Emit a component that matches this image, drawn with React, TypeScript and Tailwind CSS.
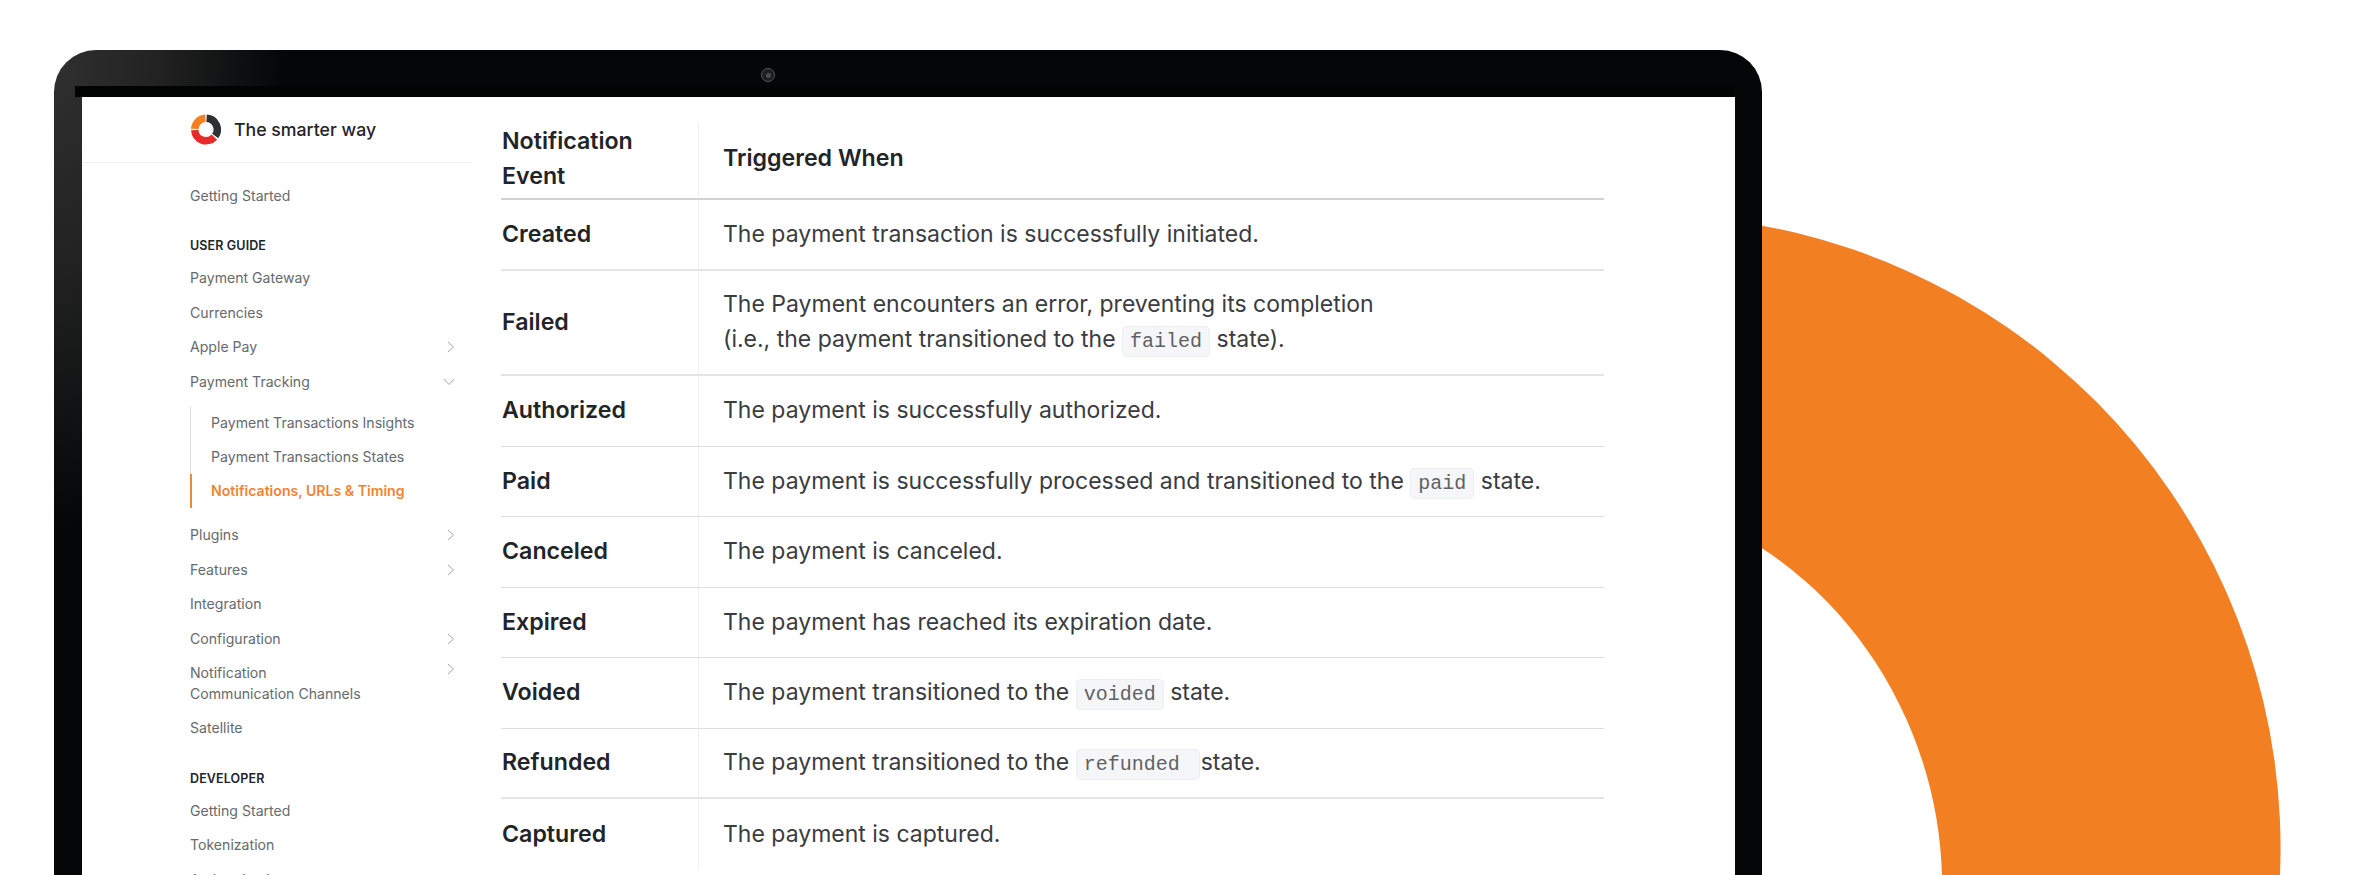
import React from "react";

function ChevronRight() {
  return (
    <svg width="8" height="12" viewBox="0 0 8 12" fill="none" stroke="#a8a8a8" strokeWidth="1" className="mt-[1px]">
      <path d="M1 1l5.5 5-5.5 5" />
    </svg>
  );
}

function ChevronDown() {
  return (
    <svg width="12" height="8" viewBox="0 0 12 8" fill="none" stroke="#a8a8a8" strokeWidth="1" className="mt-[1px]">
      <path d="M1 1l5 5.5L11 1" />
    </svg>
  );
}

function Item({ label, icon }: { label: string; icon?: "right" | "down" }) {
  return (
    <div className="flex h-[34.5px] items-center justify-between pr-[17px]">
      <span>{label}</span>
      {icon === "right" && <ChevronRight />}
      {icon === "down" && <ChevronDown />}
    </div>
  );
}

function SectionLabel({ children, className }: { children: React.ReactNode; className: string }) {
  return (
    <div className={`flex items-center text-[12.5px] font-semibold tracking-[0.01em] text-[#222428] ${className}`}>
      {children}
    </div>
  );
}

function Chip({ children }: { children: React.ReactNode }) {
  return (
    <code className="whitespace-pre rounded-[5px] border border-[#eceeef] bg-[#f5f6f7] px-[7px] py-[3px] font-['Liberation_Mono',monospace] text-[20px] leading-none text-[#5f6265]">
      {children}
    </code>
  );
}

const rows: { name: string; body: React.ReactNode; heavy?: boolean; last?: boolean; tall?: boolean }[] = [
  { name: "Created", body: "The payment transaction is successfully initiated.", heavy: true },
  {
    name: "Failed",
    body: (
      <>
        The Payment encounters an error, preventing its completion
        <br />
        (i.e., the payment transitioned to the <Chip>failed</Chip> state).
      </>
    ),
    heavy: true,
    tall: true,
  },
  { name: "Authorized", body: "The payment is successfully authorized." },
  {
    name: "Paid",
    body: (
      <>
        The payment is successfully processed and transitioned to the <Chip>paid</Chip> state.
      </>
    ),
  },
  { name: "Canceled", body: "The payment is canceled." },
  { name: "Expired", body: "The payment has reached its expiration date." },
  {
    name: "Voided",
    body: (
      <>
        The payment transitioned to the <Chip>voided</Chip> state.
      </>
    ),
  },
  {
    name: "Refunded",
    body: (
      <>
        The payment transitioned to the <Chip>{"refunded "}</Chip>
        <span className="ml-px">state.</span>
      </>
    ),
    heavy: true,
  },
  { name: "Captured", body: "The payment is captured.", last: true },
];

export default function App() {
  return (
    <div className="relative h-[875px] w-[2375px] overflow-hidden bg-white font-['Inter',sans-serif]">
      <svg width="2375" height="875" viewBox="0 0 2375 875" className="absolute left-0 top-0">
        <path
          d="M1740 222 A633 633 0 0 1 2280 875 L1942 875 C1938 735 1862 603 1740 535 Z"
          fill="#f37f23"
        />
      </svg>

      <div className="relative ml-[54px] mt-[50px] flex h-[825px] w-[1708px] flex-col overflow-hidden rounded-t-[42px] bg-[#040607] bg-[radial-gradient(ellipse_230px_480px_at_0px_0px,#303030_0%,#222222_45%,#040607_100%)] pl-[28px] pr-[27px] pt-[36px]">
        <div className="-ml-[7px] h-[11px] shrink-0 bg-[#020303]" />
        <div className="absolute left-[707px] top-[18px] flex h-[14px] w-[14px] items-center justify-center rounded-full border border-[#55595c] bg-[#1b1d1f]">
          <div className="h-[5px] w-[5px] rounded-full bg-[#4a4e52]" />
        </div>

        <div className="flex min-h-0 flex-1 overflow-hidden bg-white">
          <aside className="w-[390px] shrink-0">
            <div className="flex h-[66px] items-center gap-[13px] border-b border-[#f1f1f1] pl-[109px]">
              <svg width="30" height="31" viewBox="0 0 30 30" fill="none" strokeWidth="7.5">
                <path d="M3.75 14.4A11.25 11.25 0 0 1 14.4 3.75" stroke="#f48022" />
                <path d="M15.6 3.75A11.25 11.25 0 0 1 24.2 21.5" stroke="#2f3034" />
                <path d="M23.3 22.6A11.25 11.25 0 0 1 3.75 15.6" stroke="#e72a2c" />
              </svg>
              <span className="text-[17.7px] font-medium leading-none text-[#232427]">The smarter way</span>
            </div>

            <div className="pl-[108px] pt-[15px] text-[14.1px] text-[#666a6d]">
              <Item label="Getting Started" />
              <SectionLabel className="mt-[20px] h-[28px]">USER GUIDE</SectionLabel>
              <Item label="Payment Gateway" />
              <Item label="Currencies" />
              <Item label="Apple Pay" icon="right" />
              <Item label="Payment Tracking" icon="down" />
              <div className="mt-[7px] flex flex-col border-l border-[#dedede]">
                <div className="flex h-[34px] items-center pl-[20px]">Payment Transactions Insights</div>
                <div className="flex h-[34px] items-center pl-[20px]">Payment Transactions States</div>
                <div className="-ml-px flex h-[34px] items-center border-l-2 border-[#ee8a35] pl-[19px] font-semibold text-[#f28330]">
                  Notifications, URLs &amp; Timing
                </div>
              </div>
              <div className="mt-[10px]">
                <Item label="Plugins" icon="right" />
                <Item label="Features" icon="right" />
                <Item label="Integration" />
                <Item label="Configuration" icon="right" />
                <div className="flex h-[55px] items-start justify-between pr-[17px] pt-[6.5px] leading-[21px]">
                  <span>
                    Notification
                    <br />
                    Communication Channels
                  </span>
                  <ChevronRight />
                </div>
                <Item label="Satellite" />
              </div>
              <SectionLabel className="mt-[21px] h-[27px]">DEVELOPER</SectionLabel>
              <Item label="Getting Started" />
              <Item label="Tokenization" />
              <Item label="Authentication" />
            </div>
          </aside>

          <main className="ml-[29px] mt-[26px] w-[1103px] shrink-0">
            <table className="w-full table-fixed border-separate border-spacing-0 text-[23px] leading-[35px] text-[#3a3c3f]">
              <colgroup>
                <col className="w-[198px]" />
                <col />
              </colgroup>
              <thead>
                <tr>
                  <th className="h-[77px] border-b-2 border-r border-b-[#d2d2d2] border-r-[#efefef] pb-[4px] pl-px text-left text-[23.2px] font-semibold text-[#222428]">
                    Notification
                    <br />
                    Event
                  </th>
                  <th className="h-[77px] border-b-2 border-b-[#d2d2d2] pb-[4px] pl-[24px] text-left text-[23.2px] font-semibold text-[#222428]">
                    Triggered When
                  </th>
                </tr>
              </thead>
              <tbody>
                {rows.map((r) => {
                  const line = r.last ? "" : r.heavy ? "border-b-2 border-b-[#e4e4e4]" : "border-b border-b-[#dddddd]";
                  const height = r.tall ? "h-[105.5px]" : "h-[70.5px]";
                  return (
                    <tr key={r.name}>
                      <td className={`${height} ${line} border-r border-r-[#efefef] pl-px text-[23.2px] font-semibold text-[#222428]`}>
                        {r.name}
                      </td>
                      <td className={`${height} ${line} pl-[24px]`}>{r.body}</td>
                    </tr>
                  );
                })}
              </tbody>
            </table>
          </main>
        </div>
      </div>
    </div>
  );
}
